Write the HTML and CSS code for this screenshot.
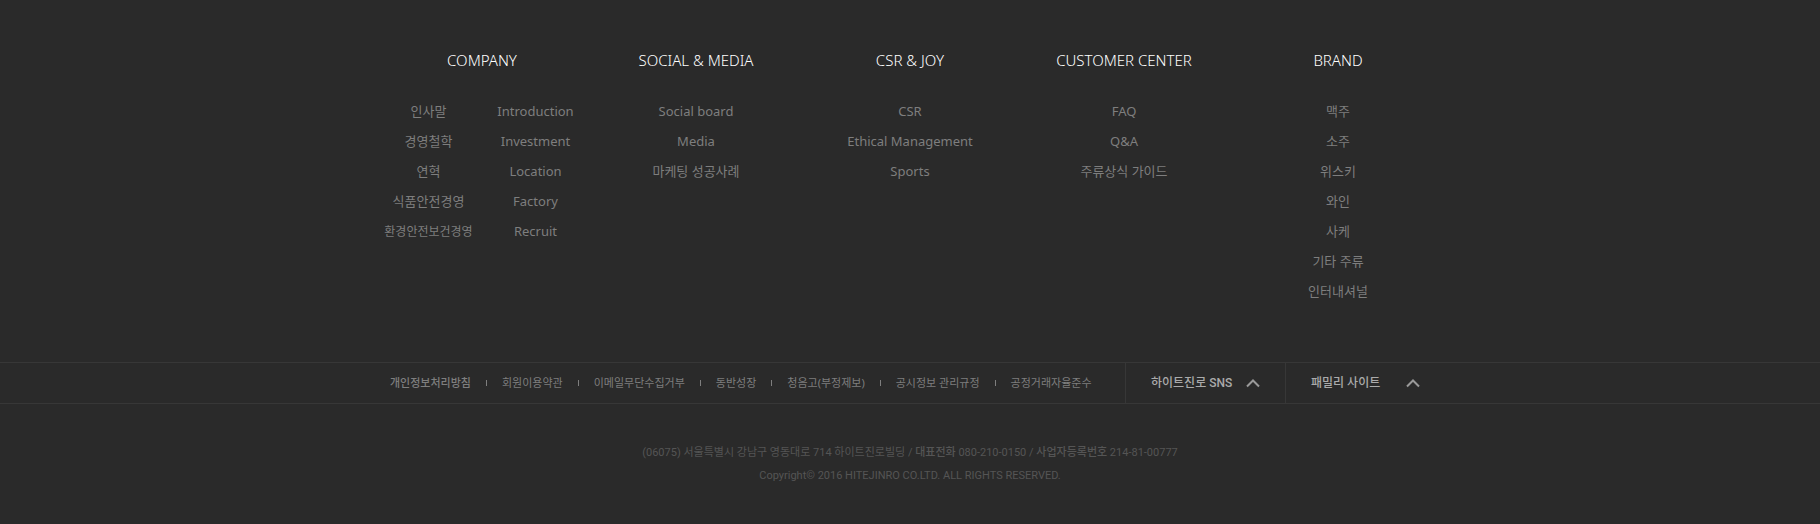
FILE: index.html
```
<!DOCTYPE html>
<html lang="ko">
<head>
<meta charset="utf-8">
<title>HITEJINRO</title>
<link rel="stylesheet" href="styles.css">
</head>
<body>
<footer class="footer">
  <nav class="sitemap" aria-label="Sitemap">
    <section class="group">
      <h2 class="group-title">COMPANY</h2>
      <div class="group-lists">
        <ul class="links">
          <li><a href="#">인사말</a></li>
          <li><a href="#">경영철학</a></li>
          <li><a href="#">연혁</a></li>
          <li><a href="#">식품안전경영</a></li>
          <li><a class="compact" href="#">환경안전보건경영</a></li>
        </ul>
        <ul class="links">
          <li><a href="#">Introduction</a></li>
          <li><a href="#">Investment</a></li>
          <li><a href="#">Location</a></li>
          <li><a href="#">Factory</a></li>
          <li><a href="#">Recruit</a></li>
        </ul>
      </div>
    </section>
    <section class="group">
      <h2 class="group-title">SOCIAL &amp; MEDIA</h2>
      <ul class="links">
        <li><a href="#">Social board</a></li>
        <li><a href="#">Media</a></li>
        <li><a href="#">마케팅 성공사례</a></li>
      </ul>
    </section>
    <section class="group">
      <h2 class="group-title">CSR &amp; JOY</h2>
      <ul class="links">
        <li><a href="#">CSR</a></li>
        <li><a href="#">Ethical Management</a></li>
        <li><a href="#">Sports</a></li>
      </ul>
    </section>
    <section class="group">
      <h2 class="group-title">CUSTOMER CENTER</h2>
      <ul class="links">
        <li><a href="#">FAQ</a></li>
        <li><a href="#">Q&amp;A</a></li>
        <li><a href="#">주류상식 가이드</a></li>
      </ul>
    </section>
    <section class="group">
      <h2 class="group-title">BRAND</h2>
      <ul class="links">
        <li><a href="#">맥주</a></li>
        <li><a href="#">소주</a></li>
        <li><a href="#">위스키</a></li>
        <li><a href="#">와인</a></li>
        <li><a href="#">사케</a></li>
        <li><a href="#">기타 주류</a></li>
        <li><a href="#">인터내셔널</a></li>
      </ul>
    </section>
  </nav>
  <div class="bar">
    <div class="bar-inner">
      <ul class="policies">
        <li><a class="strong" href="#">개인정보처리방침</a></li>
        <li><a href="#">회원이용약관</a></li>
        <li><a href="#">이메일무단수집거부</a></li>
        <li><a href="#">동반성장</a></li>
        <li><a href="#">청음고(부정제보)</a></li>
        <li><a href="#">공시정보 관리규정</a></li>
        <li><a href="#">공정거래자율준수</a></li>
      </ul>
      <button class="opener" type="button">하이트진로 SNS
        <svg class="chevron" viewBox="0 0 14 9" aria-hidden="true"><path d="M1 7.500l6-6 6 6"/></svg>
      </button>
      <button class="opener" type="button">패밀리 사이트
        <svg class="chevron" viewBox="0 0 14 9" aria-hidden="true"><path d="M1 7.500l6-6 6 6"/></svg>
      </button>
    </div>
  </div>
  <div class="legal">
    <address>(06075) 서울특별시 강남구 영동대로 714 하이트진로빌딩 / <b>대표전화</b> 080-210-0150 / <b>사업자등록번호</b> 214-81-00777</address>
    <p>Copyright© 2016 HITEJINRO CO.LTD. ALL RIGHTS RESERVED.</p>
  </div>
</footer>
</body>
</html>
```
FILE: styles.css
```
* { box-sizing: border-box; }
body {
  margin: 0;
  background: #2a2a2a;
  color: #7e7e7e;
  font-family: "Noto Sans", "Noto Sans CJK KR", sans-serif;
  font-size: 13px;
}
ul, h2, p { margin: 0; padding: 0; list-style: none; }
a { color: inherit; text-decoration: none; }
a:hover { color: #fff; }
.sitemap {
  display: grid;
  grid-template-columns: repeat(5, 1fr);
  max-width: 1070px;
  margin: 0 auto;
  padding: 45px 0 56px;
  text-align: center;
}
.group-title {
  margin-bottom: 21px;
  color: #fff;
  font-size: 15px;
  font-weight: 300;
  line-height: 30px;
  white-space: nowrap;
}
.group-lists { display: grid; grid-template-columns: 1fr 1fr; }
.links { line-height: 30px; white-space: nowrap; }
.links li { height: 30px; }
.compact { font-size: 12px; }
.bar {
  border-top: 1px solid #373737;
  border-bottom: 1px solid #373737;
}
.bar-inner {
  display: flex;
  max-width: 1070px;
  margin: 0 auto;
}
.policies {
  display: flex;
  flex: 1;
  align-items: center;
  padding-left: 15px;
  font-size: 11px;
  line-height: 40px;
  white-space: nowrap;
}
.policies li { display: flex; align-items: center; }
.policies li + li::before {
  content: "";
  width: 1px;
  height: 6px;
  margin: 0 15px;
  background: #7e7e7e;
}
.strong { font-weight: 500; }
.opener {
  display: flex;
  flex: 0 0 160px;
  align-items: center;
  justify-content: space-between;
  padding: 0 25px;
  border: 0;
  border-left: 1px solid #373737;
  background: none;
  color: #aaa;
  font: 500 12px/40px Roboto, "Noto Sans CJK KR", sans-serif;
  white-space: nowrap;
  cursor: pointer;
}
.chevron {
  width: 14px;
  height: 9px;
  fill: none;
  stroke: #999;
  stroke-width: 2;
}
.legal {
  padding: 37px 0 32px;
  color: #555;
  font-family: Roboto, "Noto Sans CJK KR", sans-serif;
  font-size: 11px;
  line-height: 23px;
  text-align: center;
}
.legal address { font-style: normal; }
.legal b { font-weight: 500; }
```
